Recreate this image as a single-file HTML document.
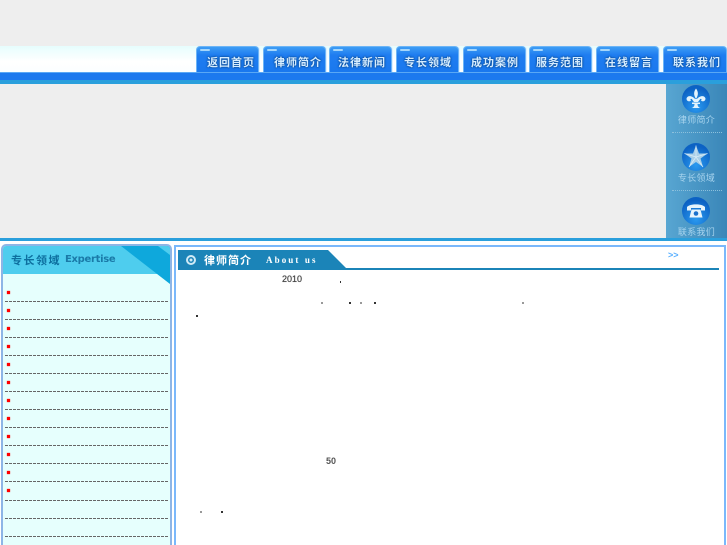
<!DOCTYPE html>
<html><head><meta charset="utf-8">
<style>
html,body{margin:0;padding:0;background:#eee;width:727px;height:545px;overflow:hidden}
body{position:relative;font-family:"Liberation Sans","Noto Sans CJK SC",sans-serif}
.a{position:absolute}
.tab{position:absolute;top:46px;width:63px;height:26px;box-sizing:border-box;background:linear-gradient(#3d9df5 0,#1f7df0 8px,#1a78ee 100%);border:1px solid #6cb4f6;border-bottom:0;border-radius:4px 4px 0 0;box-shadow:1px 0 0 #dceeff}
.tab:before{content:"";position:absolute;left:3px;top:2px;width:10px;height:2px;background:#a5d6fb;border-radius:1px}
.tab span{position:absolute;top:7px;white-space:nowrap;color:#d5ecff;font:bold 11px/17px "Noto Sans CJK SC",sans-serif;letter-spacing:1px;text-shadow:0 0 2px #0a4f9e,0 0 2px #0a4f9e,0 0 1px #0a4f9e}
.dash{position:absolute;left:5px;width:164px;height:1px;background:repeating-linear-gradient(90deg,#666 0 3px,transparent 3px 4px)}
.dot{position:absolute;left:7px;width:3px;height:3px;background:#f00;box-shadow:0 0 1px #f00}
.side{position:absolute;width:61px;text-align:center;color:#a8d4ee;font:9px/10px "Noto Sans CJK SC",sans-serif;left:666px;filter:blur(.3px);letter-spacing:.3px}
.ic{position:absolute;left:682px;width:28px;height:28px;border-radius:50%;background:radial-gradient(circle at 50% 78%,#2a9af0,#0c62c4 72%)}
.sp{position:absolute;width:2px;height:2px;background:#333}
.sq{position:absolute;width:2px;height:2px;background:#999}
</style></head><body>

<div class="a" style="left:0;top:46px;width:727px;height:26px;background:linear-gradient(#e6fdfd,#fff 60%,#fbfeff)"></div>
<div class="a" style="left:0;top:72px;width:727px;height:8px;background:#1c79ee;border-top:1px solid #5aa8f5;box-sizing:border-box"></div>
<div class="a" style="left:0;top:80px;width:727px;height:4px;background:#2a9fdc"></div>

<div class="tab" style="left:196px"><span style="left:10px">返回首页</span></div>
<div class="tab" style="left:263px"><span style="left:10px">律师简介</span></div>
<div class="tab" style="left:329px"><span style="left:8px">法律新闻</span></div>
<div class="tab" style="left:396px"><span style="left:7px">专长领域</span></div>
<div class="tab" style="left:463px"><span style="left:7px">成功案例</span></div>
<div class="tab" style="left:529px"><span style="left:6px">服务范围</span></div>
<div class="tab" style="left:596px"><span style="left:8px">在线留言</span></div>
<div class="tab" style="left:663px;width:64px"><span style="left:9px">联系我们</span></div>

<div class="a" style="left:666px;top:84px;width:61px;height:154px;background:linear-gradient(90deg,#58a6d2,#3a86b8)"></div>
<div class="a" style="left:672px;top:132px;width:50px;border-top:1px dotted #8cc0dc"></div>
<div class="a" style="left:672px;top:190px;width:50px;border-top:1px dotted #8cc0dc"></div>

<div class="ic" style="top:85px"></div>
<svg class="a" style="left:682px;top:85px" width="28" height="28" viewBox="0 0 28 28"><path d="M14 3.500C11.500 7 11.500 10 14 14C16.500 10 16.500 7 14 3.500ZM13 14C11 11 5.500 9.500 4.500 13.500C4.500 16.500 7.500 17 9 15.500C8 14.500 8.500 13.500 9.800 14L12 17H16L18.200 14C19.500 13.500 20 14.500 19 15.500C20.500 17 23.500 16.500 23.500 13.500C22.500 9.500 17 11 15 14ZM10 17.500H18V19H15.500C15.500 21 16.500 22.500 18.500 23H9.500C11.500 22.500 12.500 21 12.500 19H10Z" fill="#e3f3fc"/></svg>
<div class="side" style="top:115px">律师简介</div>

<div class="ic" style="top:143px"></div>
<svg class="a" style="left:682px;top:143px" width="28" height="28" viewBox="0 0 28 28"><path d="M14 2.500L17 10.500H25.500L18.500 15.500L21 24L14 19L7 24L9.500 15.500L2.500 10.500H11Z" fill="#a9cfe8"/><path d="M14 2.500V14M25.500 10.500L14 14M21 24L14 14M7 24L14 14M2.500 10.500L14 14" stroke="#d9edf8" stroke-width=".7" fill="none"/></svg>
<div class="side" style="top:173px">专长领域</div>

<div class="ic" style="top:197px"></div>
<svg class="a" style="left:682px;top:197px" width="28" height="28" viewBox="0 0 28 28"><path d="M5 10C8 6.500 20 6.500 23 10V13.500H19V11H9V13.500H5ZM9.500 12.500H18.500L20.500 20.500H7.500Z" fill="#e6f4fc"/><circle cx="14" cy="16.500" r="2.300" fill="#1a70cc"/></svg>
<div class="side" style="top:227px">联系我们</div>

<div class="a" style="left:0;top:238px;width:727px;height:3px;background:#2a9fdc"></div>
<div class="a" style="left:0;top:241px;width:727px;height:304px;background:#fff"></div>

<!-- left panel -->
<div class="a" style="left:1px;top:244px;width:171px;height:301px;box-sizing:border-box;border:2px solid #8db5e6;border-bottom:0;border-radius:5px 5px 0 0;background:#e6fffd;overflow:hidden">
  <div class="a" style="left:0;top:0;width:167px;height:28px;background:#4ecdee"></div>
  <svg class="a" style="left:0;top:0" width="167" height="42"><path d="M118 0H167V38Z" fill="#0ea8dc"/><path d="M155 0H167V9Z" fill="#4ecdee"/></svg>
</div>
<div class="a" style="left:11px;top:252px;color:#0d6f9f;font:bold 11px/16px 'Noto Sans CJK SC',sans-serif;letter-spacing:1.500px;white-space:nowrap">专长领域</div>
<div class="a" style="left:65px;top:252px;color:#1a7aa8;font:bold 10px/15px 'DejaVu Sans',sans-serif;letter-spacing:-.3px;white-space:nowrap">Expertise</div>

<div class="dot" style="top:291px"></div><div class="dash" style="top:301px"></div>
<div class="dot" style="top:309px"></div><div class="dash" style="top:319px"></div>
<div class="dot" style="top:327px"></div><div class="dash" style="top:337px"></div>
<div class="dot" style="top:345px"></div><div class="dash" style="top:355px"></div>
<div class="dot" style="top:363px"></div><div class="dash" style="top:373px"></div>
<div class="dot" style="top:381px"></div><div class="dash" style="top:391px"></div>
<div class="dot" style="top:399px"></div><div class="dash" style="top:409px"></div>
<div class="dot" style="top:417px"></div><div class="dash" style="top:427px"></div>
<div class="dot" style="top:435px"></div><div class="dash" style="top:445px"></div>
<div class="dot" style="top:453px"></div><div class="dash" style="top:463px"></div>
<div class="dot" style="top:471px"></div><div class="dash" style="top:481px"></div>
<div class="dot" style="top:489px"></div><div class="dash" style="top:500px"></div>
<div class="dash" style="top:518px"></div>
<div class="dash" style="top:536px"></div>

<!-- right panel -->
<div class="a" style="left:174px;top:245px;width:552px;height:300px;box-sizing:border-box;border:2px solid #7ab8fb;border-bottom:0"></div>
<svg class="a" style="left:178px;top:250px" width="170" height="20"><path d="M0 0H150L168 18H0Z" fill="#1b84b8"/></svg>
<div class="a" style="left:178px;top:268px;width:541px;height:2px;background:#1b84b8"></div>
<svg class="a" style="left:185px;top:254px" width="12" height="12"><circle cx="6" cy="6" r="4" fill="none" stroke="#cfeaf6" stroke-width="2"/><circle cx="6" cy="6" r="1.500" fill="#cfeaf6"/></svg>
<div class="a" style="left:204px;top:252px;color:#fff;font:bold 11px/16px 'Noto Sans CJK SC',sans-serif;letter-spacing:1px;white-space:nowrap">律师简介</div>
<div class="a" style="left:266px;top:253px;color:#fff;font:bold 9px/14px 'Liberation Serif',serif;letter-spacing:2.100px;white-space:nowrap">About us</div>
<div class="a" style="left:668px;top:250px;color:#5ab0ff;font:bold 9px/11px 'Liberation Sans',sans-serif;white-space:nowrap">&gt;&gt;</div>
<div class="a" style="left:282px;top:273px;color:#444;font:9px/12px 'Liberation Sans',sans-serif;white-space:nowrap;text-shadow:0 0 .5px #444">2010</div>
<div class="a" style="left:326px;top:455px;color:#555;font:bold 9px/12px 'Liberation Sans',sans-serif;white-space:nowrap">50</div>

<div class="sp" style="left:340px;top:281px;height:2px;width:1px"></div>
<div class="sq" style="left:321px;top:302px"></div>
<div class="sp" style="left:349px;top:302px"></div>
<div class="sq" style="left:360px;top:302px"></div>
<div class="sp" style="left:374px;top:302px"></div>
<div class="sq" style="left:522px;top:302px"></div>
<div class="sp" style="left:196px;top:315px"></div>
<div class="sq" style="left:200px;top:511px"></div>
<div class="sp" style="left:221px;top:511px"></div>

</body></html>
